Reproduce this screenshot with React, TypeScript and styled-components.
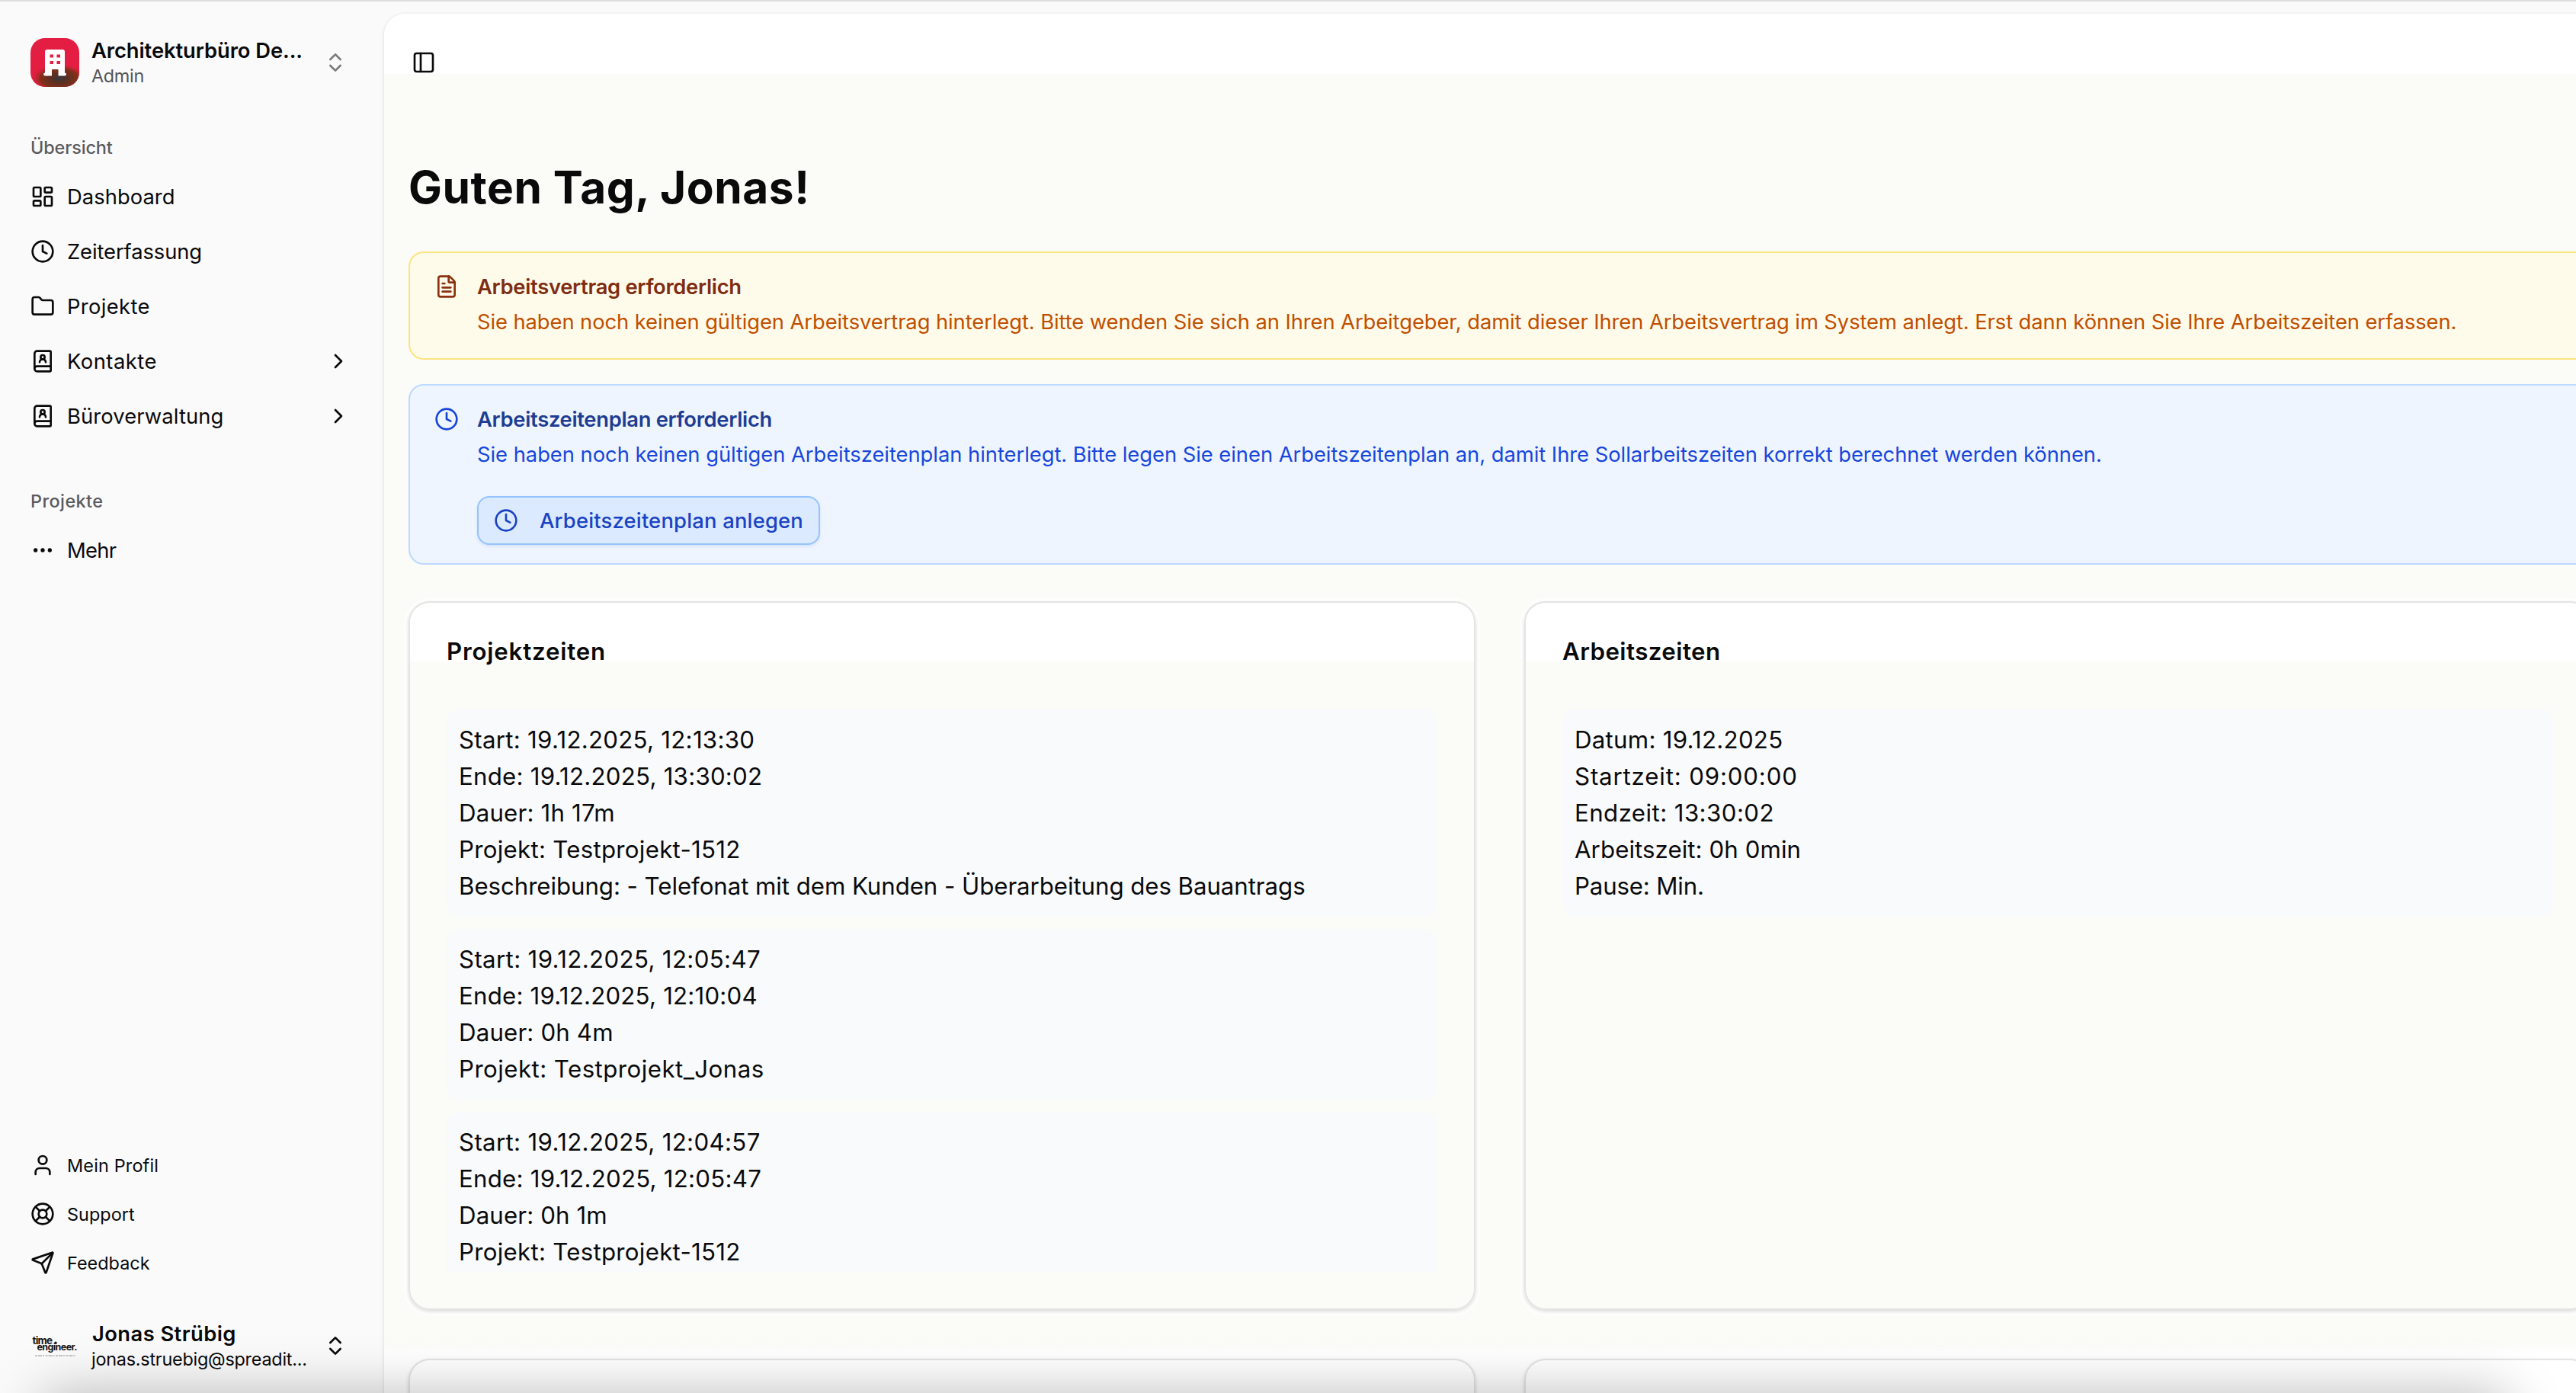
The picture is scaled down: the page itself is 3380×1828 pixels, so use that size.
import React from 'react';
import styled, { createGlobalStyle } from 'styled-components';
import {
  BookUser,
  ChevronRight,
  ChevronsUpDown,
  Clock,
  Ellipsis,
  FileText,
  Folder,
  LayoutDashboard,
  LifeBuoy,
  PanelLeft,
  Send,
  User,
} from 'lucide-react';

const ink = '#0a0a0b';
const cream = '#fbfbf8';

const GlobalStyle = createGlobalStyle`
  *, *::before, *::after { box-sizing: border-box; }
  html, body { margin: 0; height: 100%; overflow: hidden; }
  body {
    background: #fafafb;
    color: ${ink};
    font-family: Inter, "Liberation Sans", sans-serif;
    -webkit-font-smoothing: antialiased;
  }
`;

const Shell = styled.div`
  position: relative;
  display: flex;
  width: 100vw;
  height: 100vh;
  overflow: hidden;
  border-top: 2px solid #dddddd;
`;

/* Sidebar */

const Sidebar = styled.aside`
  display: flex;
  flex: none;
  flex-direction: column;
  width: 504px;
  padding: 46px 44px 28px 40px;
`;

const Account = styled.div`
  display: flex;
  align-items: center;
  gap: 16px;
  height: 68px;
  padding-right: 4px;
`;

const AccountText = styled.div`
  flex: 1;
  min-width: 0;
  white-space: nowrap;
`;

const AccountName = styled.div<{ $ls: number; $indent?: number }>`
  padding-left: ${(p) => p.$indent ?? 0}px;
  font-size: 27.36px;
  font-weight: 600;
  line-height: 35px;
  letter-spacing: ${(p) => p.$ls}px;
`;

const AccountNote = styled.div<{ $ls: number; $muted?: boolean }>`
  font-size: 23.45px;
  line-height: 32px;
  letter-spacing: ${(p) => p.$ls}px;
  color: ${(p) => (p.$muted ? '#555557' : ink)};
`;

const NavGroup = styled.nav<{ $top?: number; $gap?: number }>`
  display: flex;
  flex-direction: column;
  gap: ${(p) => p.$gap ?? 8}px;
  margin-top: ${(p) => p.$top ?? 48}px;
`;

const NavLabel = styled.div<{ $ls: number }>`
  height: 64px;
  margin: 0 0 -8px;
  font-size: 23.45px;
  font-weight: 500;
  line-height: 63px;
  letter-spacing: ${(p) => p.$ls}px;
  color: #5b5b5d;
`;

const NavItem = styled.a<{ $ls: number; $small?: boolean }>`
  display: flex;
  align-items: center;
  gap: 16px;
  height: ${(p) => (p.$small ? 56 : 64)}px;
  font-size: ${(p) => (p.$small ? 23.45 : 27.36)}px;
  letter-spacing: ${(p) => p.$ls}px;
  white-space: nowrap;
  & > span { flex: 1; }
`;

const Spacer = styled.div`
  flex: 1;
`;

/* Main panel */

const Panel = styled.main`
  display: flex;
  flex: none;
  flex-direction: column;
  width: 2928px;
  height: 1900px;
  margin-top: 16px;
  padding: 0 32px;
  border-radius: 28px 0 0 0;
  background: linear-gradient(#ffffff 79px, ${cream} 79px, ${cream} 1744px, #ffffff 1756px);
  box-shadow: 0 0 0 2px rgba(0, 0, 0, 0.02), 0 2px 6px rgba(0, 0, 0, 0.08);
  & > * { flex: none; }
`;

const Toolbar = styled.header`
  display: flex;
  align-items: center;
  height: 128px;
  padding-left: 4px;
`;

const Greeting = styled.h1`
  margin: 64px 0 48px;
  font-size: 58.6px;
  font-weight: 700;
  line-height: 72px;
  letter-spacing: 0.54px;
`;

const tones = {
  amber: { bg: '#fffbea', border: '#fee481', icon: '#8a3210', title: '#7f2d12', text: '#bf4f00' },
  blue: { bg: '#eef5ff', border: '#bcd9ff', icon: '#1745d8', title: '#1e3c91', text: '#1846dc' },
};
type Tone = keyof typeof tones;

const Alert = styled.section<{ $tone: Tone; $bottom: number }>`
  display: flex;
  gap: 24px;
  margin-bottom: 32px;
  padding: 24px 32px ${(p) => p.$bottom}px;
  border: 2px solid ${(p) => tones[p.$tone].border};
  border-radius: 20px;
  background: ${(p) => tones[p.$tone].bg};
  color: ${(p) => tones[p.$tone].icon};
  & > svg { flex: none; margin-top: 4px; }
`;

const AlertTitle = styled.h2<{ $tone: Tone }>`
  margin: 0 0 4px;
  font-size: 27.36px;
  font-weight: 600;
  line-height: 40px;
  letter-spacing: -0.31px;
  color: ${(p) => tones[p.$tone].title};
`;

const AlertText = styled.p<{ $tone: Tone; $ls: number }>`
  margin: 0;
  font-size: 27.36px;
  line-height: 44px;
  letter-spacing: ${(p) => p.$ls}px;
  white-space: nowrap;
  color: ${(p) => tones[p.$tone].text};
`;

const AlertButton = styled.button`
  display: flex;
  align-items: center;
  gap: 28px;
  width: 450px;
  height: 64px;
  margin-top: 33px;
  padding: 0 20px;
  border: 2px solid #95c3fd;
  border-radius: 16px;
  background: #dbeafe;
  box-shadow: 0 2px 4px rgba(30, 80, 200, 0.12);
  color: #1a43c4;
  font: 500 27.36px Inter, "Liberation Sans", sans-serif;
  letter-spacing: 0.2px;
  white-space: nowrap;
`;

const CardGrid = styled.div`
  display: grid;
  grid-template-columns: 1400px 1400px;
  grid-auto-rows: 930px;
  gap: 64px;
  margin-top: 16px;
`;

const Card = styled.section<{ $empty?: boolean }>`
  display: flex;
  flex-direction: column;
  padding: 48px;
  border: 2px solid #e4e4e4;
  border-radius: 28px;
  background: ${(p) =>
    p.$empty ? '#ffffff' : `linear-gradient(#ffffff 77px, ${cream} 77px)`};
  box-shadow: 0 2px 5px rgba(0, 0, 0, 0.14), 0 2px 1px 6px rgba(255, 255, 255, 0.75);
`;

const CardTitle = styled.h3<{ $ls: number }>`
  margin: 0 0 60px;
  font-size: 31.26px;
  font-weight: 600;
  line-height: 32px;
  letter-spacing: ${(p) => p.$ls}px;
`;

const EntryList = styled.div`
  display: flex;
  flex: 1;
  flex-direction: column;
  gap: 16px;
  min-height: 0;
  overflow: hidden;
`;

const Entry = styled.div`
  flex: none;
  padding: 16px;
  border-radius: 16px;
  background: #f9fafc;
`;

const Line = styled.div<{ $ls: number }>`
  font-size: 31.26px;
  line-height: 48px;
  letter-spacing: ${(p) => p.$ls}px;
  white-space: nowrap;
`;

/* Shade rising from the lower window edge */
const BottomShade = styled.div`
  position: absolute;
  left: 56px;
  right: 90px;
  top: 100%;
  height: 60px;
  border-radius: 30px;
  box-shadow: 0 8px 70px 8px rgba(0, 0, 0, 0.27);
  pointer-events: none;
`;

const LogoSvg = styled.svg`
  flex: none;
  overflow: visible;
`;

const CompanyLogo = () => (
  <LogoSvg width="64" height="64" viewBox="0 0 64 64">
    <defs>
      <radialGradient id="ground" cx="0.5" cy="0.5" r="0.5">
        <stop offset="0" stopColor="#33393c" />
        <stop offset="0.28" stopColor="#5a3023" />
        <stop offset="0.65" stopColor="#842f18" />
        <stop offset="1" stopColor="#e41e42" stopOpacity="0" />
      </radialGradient>
      <clipPath id="tile"><rect width="64" height="64" rx="19" /></clipPath>
    </defs>
    <g clipPath="url(#tile)">
      <rect width="64" height="64" fill="#e41e42" />
      <ellipse cx="38" cy="53" rx="38" ry="20" fill="url(#ground)" />
      <path
        fill="#fff"
        fillRule="evenodd"
        d="M22 15h20a3 3 0 0 1 3 3v27.500a2 2 0 0 1 2 2v0a2 2 0 0 1-2 2h-8.500V42a1 1 0 0 0-1-1h-6.500a1 1 0 0 0-1 1v7.500H19a2 2 0 0 1-2-2v0a2 2 0 0 1 2-2V18a3 3 0 0 1 3-3zM25.500 21.500v4h4.500v-4zM34.500 21.500v4h4.500v-4zM25.500 30v4h4.500v-4zM34.500 30v4h4.500v-4z"
      />
    </g>
  </LogoSvg>
);

const UserLogo = () => (
  <LogoSvg
    width="64"
    height="64"
    viewBox="0 0 64 64"
    fill="#161617"
    fontFamily="Inter, 'Liberation Sans', sans-serif"
    fontWeight="700"
  >
    <text x="2.500" y="29.500" fontSize="13.500" letterSpacing="-0.800">time</text>
    <circle cx="33" cy="28.300" r="1.700" />
    <text x="8.500" y="38" fontSize="12.500" letterSpacing="-0.600">engineer.</text>
    <path d="M6 45h54" stroke="#b5b5b7" strokeWidth="1.500" strokeDasharray="3 1 5 1 2 1.500" />
  </LogoSvg>
);

const mainNav = [
  { label: 'Dashboard', icon: LayoutDashboard, ls: 0.05 },
  { label: 'Zeiterfassung', icon: Clock, ls: -0.09 },
  { label: 'Projekte', icon: Folder, ls: 0.36 },
  { label: 'Kontakte', icon: BookUser, ls: 0.5, more: true },
  { label: 'Büroverwaltung', icon: BookUser, ls: 0.1, more: true },
];

const footerNav = [
  { label: 'Mein Profil', icon: User, ls: 0.15 },
  { label: 'Support', icon: LifeBuoy, ls: 0.04 },
  { label: 'Feedback', icon: Send, ls: 0 },
];

type Row = [string, number];

const projectTimes: Row[][] = [
  [
    ['Start: 19.12.2025, 12:13:30', 0.26],
    ['Ende: 19.12.2025, 13:30:02', 0.23],
    ['Dauer: 1h 17m', 0.17],
    ['Projekt: Testprojekt-1512', 0.26],
    ['Beschreibung: - Telefonat mit dem Kunden - Überarbeitung des Bauantrags', -0.07],
  ],
  [
    ['Start: 19.12.2025, 12:05:47', 0.34],
    ['Ende: 19.12.2025, 12:10:04', 0.2],
    ['Dauer: 0h 4m', 0.15],
    ['Projekt: Testprojekt_Jonas', 0.44],
  ],
  [
    ['Start: 19.12.2025, 12:04:57', 0.33],
    ['Ende: 19.12.2025, 12:05:47', 0.24],
    ['Dauer: 0h 1m', 0.12],
    ['Projekt: Testprojekt-1512', 0.26],
  ],
];

const workTimes: Row[][] = [
  [
    ['Datum: 19.12.2025', 0.25],
    ['Startzeit: 09:00:00', 0.83],
    ['Endzeit: 13:30:02', 0.42],
    ['Arbeitszeit: 0h 0min', 0.06],
    ['Pause: Min.', -0.18],
  ],
];

const Entries = ({ items }: { items: Row[][] }) => (
  <EntryList>
    {items.map((rows, i) => (
      <Entry key={i}>
        {rows.map(([text, ls]) => (
          <Line key={text} $ls={ls}>{text}</Line>
        ))}
      </Entry>
    ))}
  </EntryList>
);

export default function App() {
  return (
    <>
      <GlobalStyle />
      <Shell>
        <Sidebar>
          <Account>
            <CompanyLogo />
            <AccountText>
              <AccountName $ls={-0.08}>Architekturbüro De...</AccountName>
              <AccountNote $ls={-0.33} $muted>Admin</AccountNote>
            </AccountText>
            <ChevronsUpDown size={32} color="#7b7b7d" />
          </Account>

          <NavGroup $top={46}>
            <NavLabel $ls={-0.13}>Übersicht</NavLabel>
            {mainNav.map(({ label, icon: Icon, ls, more }) => (
              <NavItem key={label} $ls={ls}>
                <Icon size={32} />
                <span>{label}</span>
                {more && <ChevronRight size={32} />}
              </NavItem>
            ))}
          </NavGroup>

          <NavGroup $top={48}>
            <NavLabel $ls={0.42}>Projekte</NavLabel>
            <NavItem $ls={-0.67}>
              <Ellipsis size={32} />
              <span>Mehr</span>
            </NavItem>
          </NavGroup>

          <Spacer />

          <NavGroup $top={0}>
            {footerNav.map(({ label, icon: Icon, ls }) => (
              <NavItem key={label} $ls={ls} $small>
                <Icon size={32} />
                <span>{label}</span>
              </NavItem>
            ))}
          </NavGroup>

          <NavGroup $top={47}>
            <Account>
              <UserLogo />
              <AccountText>
                <AccountName $ls={0.42} $indent={1}>Jonas Strübig</AccountName>
                <AccountNote $ls={-0.26}>jonas.struebig@spreadit...</AccountNote>
              </AccountText>
              <ChevronsUpDown size={32} />
            </Account>
          </NavGroup>
        </Sidebar>

        <Panel>
          <Toolbar>
            <PanelLeft size={32} />
          </Toolbar>
          <Greeting>Guten Tag, Jonas!</Greeting>

          <Alert $tone="amber" $bottom={26}>
            <FileText size={32} />
            <div>
              <AlertTitle $tone="amber">Arbeitsvertrag erforderlich</AlertTitle>
              <AlertText $tone="amber" $ls={-0.083}>
                Sie haben noch keinen gültigen Arbeitsvertrag hinterlegt. Bitte wenden Sie sich an Ihren
                Arbeitgeber, damit dieser Ihren Arbeitsvertrag im System anlegt. Erst dann können Sie Ihre
                Arbeitszeiten erfassen.
              </AlertText>
            </div>
          </Alert>

          <Alert $tone="blue" $bottom={24}>
            <Clock size={32} />
            <div>
              <AlertTitle $tone="blue">Arbeitszeitenplan erforderlich</AlertTitle>
              <AlertText $tone="blue" $ls={-0.037}>
                Sie haben noch keinen gültigen Arbeitszeitenplan hinterlegt. Bitte legen Sie einen
                Arbeitszeitenplan an, damit Ihre Sollarbeitszeiten korrekt berechnet werden können.
              </AlertText>
              <AlertButton>
                <Clock size={32} />
                Arbeitszeitenplan anlegen
              </AlertButton>
            </div>
          </Alert>

          <CardGrid>
            <Card>
              <CardTitle $ls={0.8}>Projektzeiten</CardTitle>
              <Entries items={projectTimes} />
            </Card>
            <Card>
              <CardTitle $ls={0.44}>Arbeitszeiten</CardTitle>
              <Entries items={workTimes} />
            </Card>
            <Card $empty />
            <Card $empty />
          </CardGrid>
        </Panel>
        <BottomShade />
      </Shell>
    </>
  );
}
